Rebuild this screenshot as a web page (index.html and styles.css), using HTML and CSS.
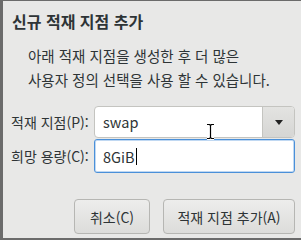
FILE: index.html
```html
<!DOCTYPE html>
<html lang="ko">
<head>
  <meta charset="UTF-8">
  <title>신규 적재 지점 추가</title>
  <link rel="stylesheet" href="styles.css">
</head>
<body>
  <div class="dialog">
    <h1 class="title">신규 적재 지점 추가</h1>
    <p class="desc">아래 적재 지점을 생성한 후 더 많은<br>사용자 정의 선택을 사용 할 수 있습니다.</p>

    <div class="form">
      <label class="label">적재 지점(P):</label>
      <div class="combo">
        <span class="combo-text">swap</span>
        <span class="combo-btn"><span class="arrow"></span></span>
        <!-- mouse pointer -->
        <svg class="ibeam" width="9" height="17" viewBox="0 0 9 17">
          <path d="M1 1.5h2.5l1 1 1-1H8M4.5 2.5v12M1 15.5h2.5l1-1 1 1H8" fill="none" stroke="#fff" stroke-width="3"/>
          <path d="M1 1.5h2.5l1 1 1-1H8M4.5 2.5v12M1 15.5h2.5l1-1 1 1H8" fill="none" stroke="#000" stroke-width="1.2"/>
        </svg>
      </div>

      <label class="label">희망 용량(C):</label>
      <div class="entry"><span>8GiB</span><span class="caret"></span></div>
    </div>

    <div class="actions">
      <button class="btn btn-cancel">취소(C)</button>
      <button class="btn btn-add">적재 지점 추가(A)</button>
    </div>
  </div>
</body>
</html>
```

FILE: styles.css
```css
* {
  margin: 0;
  padding: 0;
  box-sizing: border-box;
}

body {
  background-color: #6b6b6b;
  font-family: "Noto Sans CJK KR", "Noto Sans", sans-serif;
  color: #2e3436;
  padding: 1px 0 2px 3px;
  height: 240px;
  overflow: hidden;
}

.dialog {
  background-color: #e8e8e7;
  height: 237px;
  display: flex;
  flex-direction: column;
}

.title {
  font-size: 16px;
  font-weight: bold;
  line-height: 20px;
  margin: 10px 0 0 9px;
}

.desc {
  font-size: 14.5px;
  line-height: 24px;
  margin: 13px 0 0 25px;
}

.form {
  display: grid;
  grid-template-columns: 91px 201px;
  grid-template-rows: 32px 34px;
  row-gap: 1px;
  align-items: center;
  margin-top: 14px;
}

.label {
  font-size: 14px;
  padding-left: 8px;
}

.combo {
  position: relative;
  height: 32px;
  display: flex;
  border: 1px solid #c4c4c0;
  border-radius: 4px;
  background: #fff;
}

.combo-text {
  flex: 1;
  font-size: 14.5px;
  line-height: 29px;
  padding-left: 8px;
}

.combo-btn {
  width: 32px;
  display: flex;
  align-items: center;
  justify-content: center;
  border-left: 1px solid #c4c4c0;
  border-radius: 0 3px 3px 0;
  background: linear-gradient(#e3e3e1, #d6d6d4);
}

.arrow {
  width: 0;
  height: 0;
  border-left: 4.5px solid transparent;
  border-right: 4.5px solid transparent;
  border-top: 5px solid #222;
  margin-top: 1px;
}

.ibeam {
  position: absolute;
  left: 111px;
  top: 16px;
}

.entry {
  height: 34px;
  display: flex;
  align-items: center;
  border: 1px solid #4a90d9;
  box-shadow: inset 0 0 0 1px rgba(74, 144, 217, 0.35);
  border-radius: 3px;
  background: #fff;
  font-size: 14.5px;
  padding-left: 8px;
}

.caret {
  width: 1px;
  height: 17px;
  background: #000;
  margin-left: 1px;
}

.actions {
  display: flex;
  justify-content: flex-end;
  gap: 13px;
  padding-right: 6px;
  margin-top: 26px;
}

.btn {
  height: 35px;
  font-family: inherit;
  font-size: 14px;
  color: #2e3436;
  border: 1px solid #b6b6b3;
  border-radius: 4px;
  background: linear-gradient(#ededec, #dcdcda);
}

.btn-cancel {
  width: 76px;
}

.btn-add {
  width: 132px;
}
```
